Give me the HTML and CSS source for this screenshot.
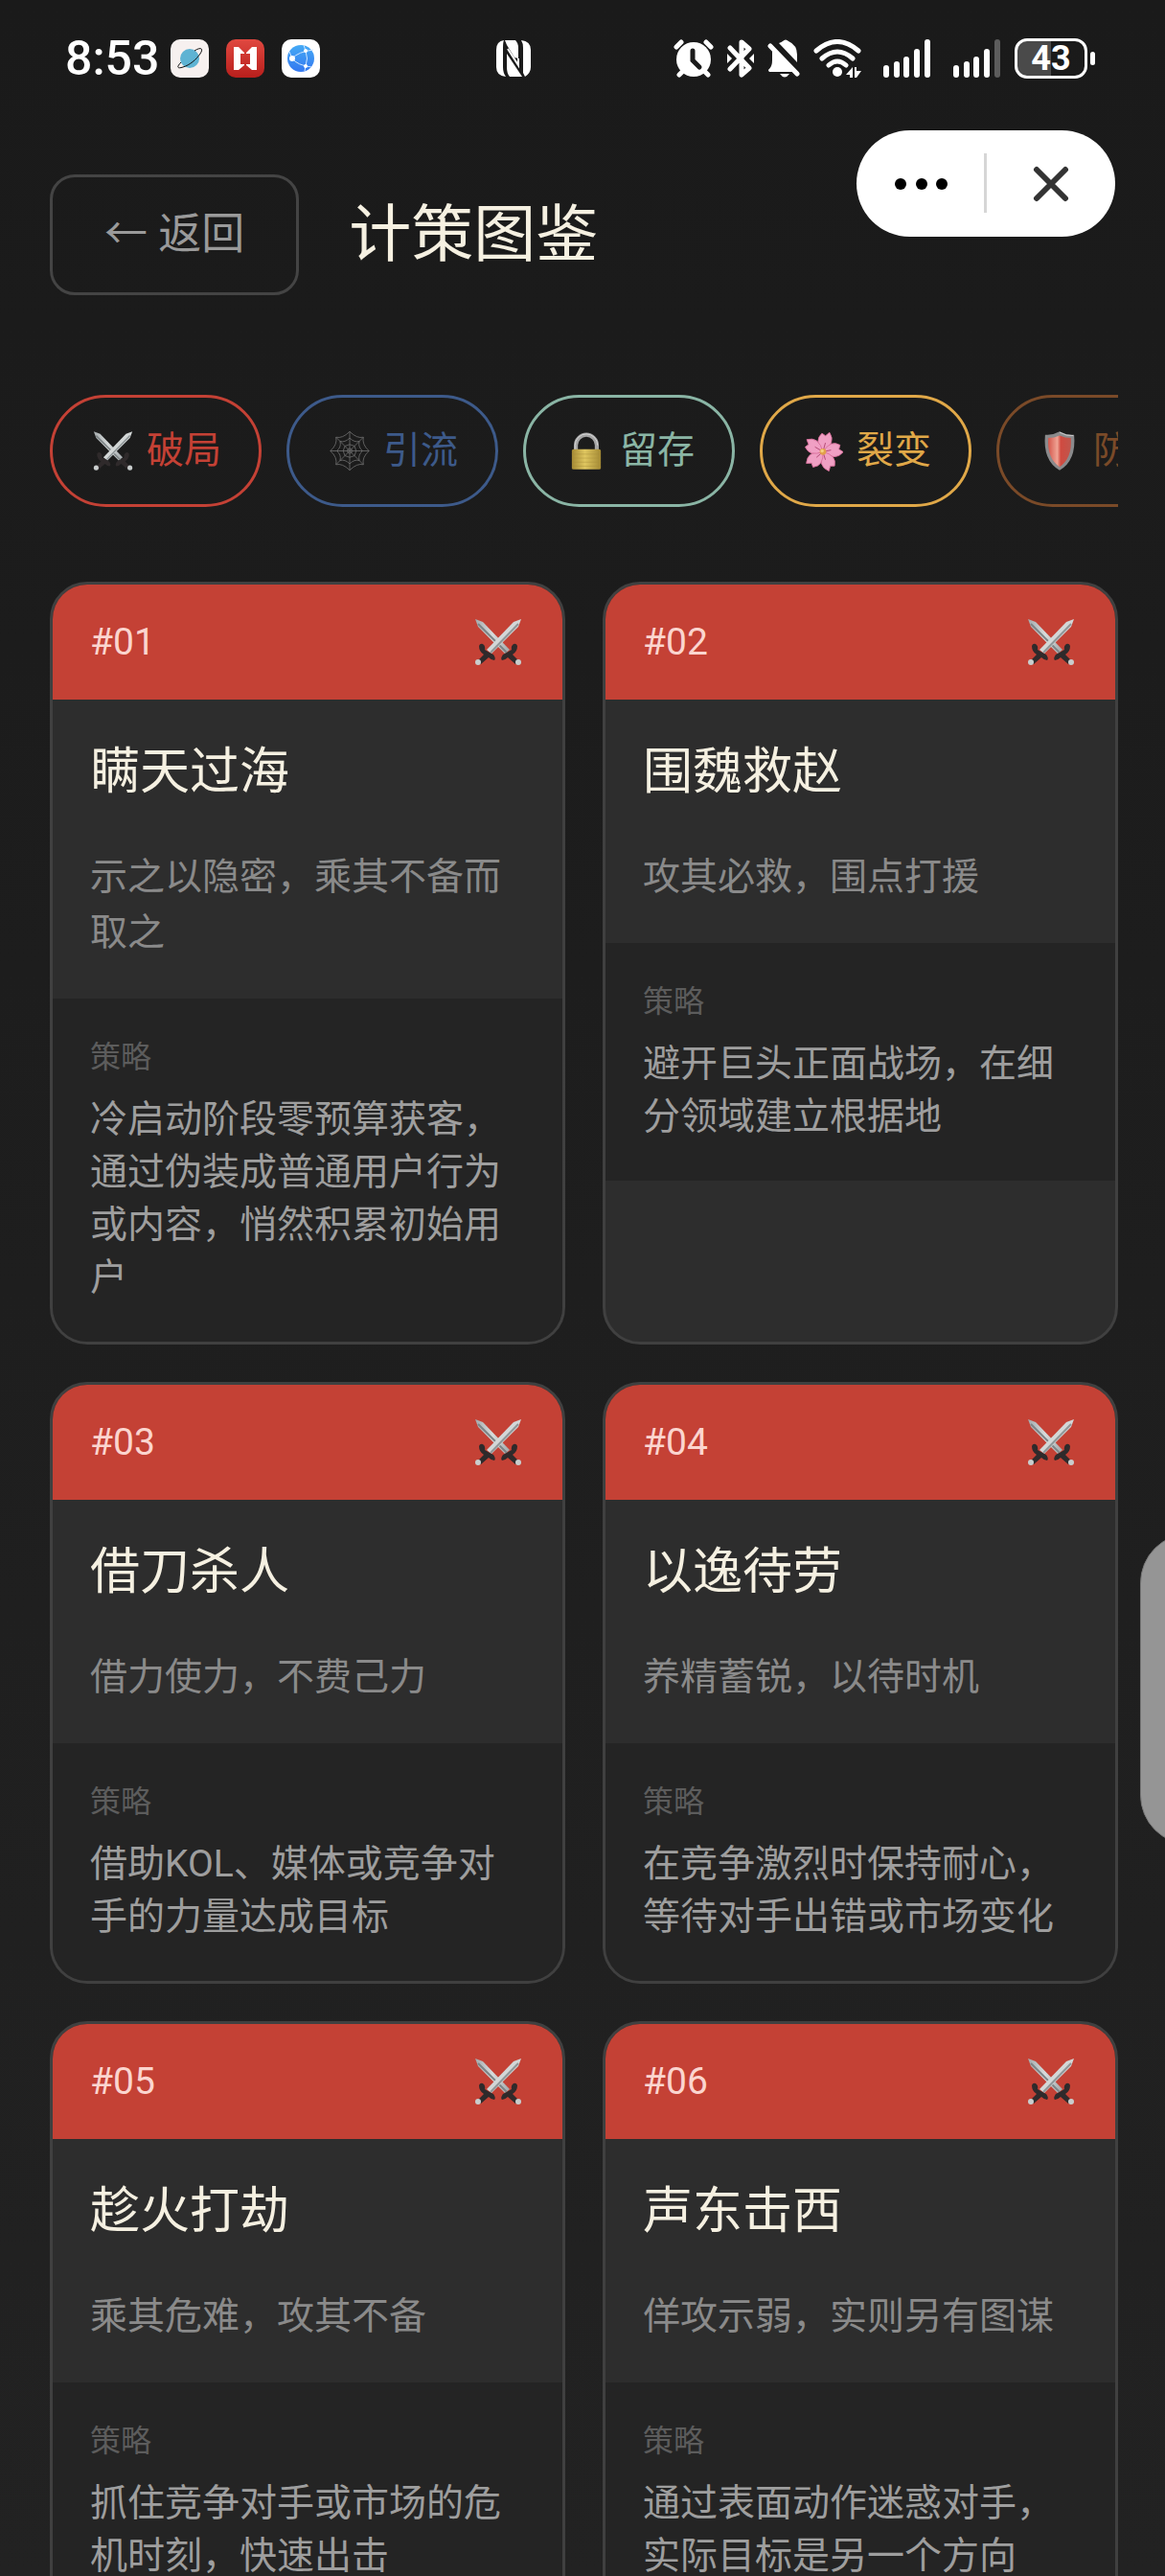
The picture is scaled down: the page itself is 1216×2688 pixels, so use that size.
FILE: index.html
```html
<!DOCTYPE html>
<html lang="zh-CN">
<head>
  <meta charset="UTF-8" />
  <meta name="viewport" content="width=device-width, initial-scale=1.0"/>
  <title>计策图鉴</title>
  <link rel="stylesheet" href="styles.css">
</head>
<body>

  <!-- Shared icons -->
  <svg class="sprite" aria-hidden="true">
    <defs>
      <linearGradient id="blade" x1="0" y1="0" x2="1" y2="0">
        <stop offset="0" stop-color="#a3a9ab"/>
        <stop offset="0.5" stop-color="#d8dcdc"/>
        <stop offset="1" stop-color="#a3a9ab"/>
      </linearGradient>
      <linearGradient id="gold" x1="0" y1="0" x2="1" y2="0">
        <stop offset="0" stop-color="#a58a35"/>
        <stop offset="0.45" stop-color="#dfc660"/>
        <stop offset="1" stop-color="#a48a34"/>
      </linearGradient>
      <linearGradient id="shieldRed" x1="0" y1="0" x2="1" y2="0">
        <stop offset="0" stop-color="#d4574c"/>
        <stop offset="0.4" stop-color="#f0a394"/>
        <stop offset="0.55" stop-color="#d04a40"/>
        <stop offset="1" stop-color="#c0564c"/>
      </linearGradient>
      <linearGradient id="appRed" x1="0" y1="0" x2="0" y2="1">
        <stop offset="0" stop-color="#e04840"/>
        <stop offset="1" stop-color="#b81f1c"/>
      </linearGradient>
      <linearGradient id="globeBlue" x1="0" y1="0" x2="0" y2="1">
        <stop offset="0" stop-color="#45aaf5"/>
        <stop offset="1" stop-color="#3478f0"/>
      </linearGradient>
    </defs>
    <symbol id="swords" viewBox="0 0 50 50">
      <path d="M1 1L9 4L37 33L32 37L4 9z" fill="url(#blade)"/>
      <path d="M4 6L34 36" stroke="#7d8486" stroke-width="2"/>
      <path d="M49 1L41 4L13 33L18 37L46 9z" fill="#d3d7d7"/>
      <path d="M46 6L17 36" stroke="#8f9698" stroke-width="2"/>
      <path d="M5 29Q6 26 9 27Q12 29 11 33Q16 36 20 38Q23 42 21 44Q18 44 15 41L7 48L3 45L10 38Q5 35 5 29z" fill="#2f2a2b"/>
      <path d="M45 29Q44 26 41 27Q38 29 39 33Q34 36 30 38Q27 42 29 44Q32 44 35 41L43 48L47 45L40 38Q45 35 45 29z" fill="#2f2a2b"/>
      <circle cx="4" cy="46" r="3" fill="#c9cdcd"/>
      <circle cx="46" cy="46" r="3" fill="#c9cdcd"/>
    </symbol>
    <symbol id="web" viewBox="0 0 50 50">
      <g fill="none" stroke="#6b6b6b" stroke-width="1">
        <path d="M25 1V49M1 25H49M8 8L42 42M42 8L8 42"/>
        <path d="M25 1Q34 10 42 8Q40 17 49 25Q40 33 42 42Q34 40 25 49Q16 40 8 42Q10 33 1 25Q10 17 8 8Q16 10 25 1z"/>
        <path d="M25 9Q31 15 37 13Q35 20 41 25Q35 30 37 37Q31 35 25 41Q19 35 13 37Q15 30 9 25Q15 20 13 13Q19 15 25 9z"/>
        <path d="M25 17L31 19L33 25L31 31L25 33L19 31L17 25L19 19z"/>
        <circle cx="25" cy="25" r="3"/>
      </g>
    </symbol>
    <symbol id="lock" viewBox="0 0 50 50">
      <path d="M12 25V18a13 13 0 0 1 26 0V25" fill="none" stroke="#a5a5a5" stroke-width="5"/>
      <path d="M11 25V18a14 14 0 0 1 28 0" fill="none" stroke="#dedede" stroke-width="1"/>
      <rect x="7" y="23" width="36" height="25" rx="2" fill="url(#gold)"/>
      <path d="M7 29H43M7 34H43M7 39H43M7 44H43" stroke="#a98f3c" stroke-width="1" opacity="0.5"/>
    </symbol>
    <symbol id="flower" viewBox="0 0 50 50">
      <g fill="#f0a0c4" stroke="#d9709c" stroke-width="1" transform="rotate(12 25 26)">
        <path id="petal" d="M25 26Q11 15 19 4L24 6L28 1Q39 12 25 26z"/>
        <use href="#petal" transform="rotate(72 25 26)"/>
        <use href="#petal" transform="rotate(144 25 26)"/>
        <use href="#petal" transform="rotate(216 25 26)"/>
        <use href="#petal" transform="rotate(288 25 26)"/>
      </g>
      <g stroke="#a83c68" stroke-width="1">
        <path d="M25 26L28 15M25 26L35 24M25 26L28 36M25 26L17 33M25 26L15 20"/>
      </g>
      <circle cx="25" cy="26" r="4" fill="#e2a04a"/>
      <circle cx="24" cy="25" r="2" fill="#f5d080"/>
    </symbol>
    <symbol id="shield" viewBox="0 0 50 50">
      <path d="M25 1Q34 6 43 5Q46 37 25 49Q4 37 7 5Q16 6 25 1z" fill="#8a8a8c"/>
      <path d="M25 2Q34 7 42 6" fill="none" stroke="#d8d8d8" stroke-width="1"/>
      <path d="M25 6Q32 9 39 9Q41 34 25 45Q9 34 11 9Q18 9 25 6z" fill="url(#shieldRed)"/>
    </symbol>
    <symbol id="signal" viewBox="0 0 50 40">
      <rect x="0" y="27" width="6" height="13" rx="3"/>
      <rect x="11" y="23" width="6" height="17" rx="3"/>
      <rect x="21" y="18" width="6" height="22" rx="3"/>
      <rect x="32" y="10" width="6" height="30" rx="3"/>
    </symbol>
  </svg>

  <div class="screen">

    <!-- Phone status bar -->
    <div class="status-bar">
      <span class="time">8:53</span>
      <div class="status-apps">
        <svg width="40" height="40" viewBox="0 0 40 40">
          <rect width="40" height="40" rx="10" fill="#f6f0ef"/>
          <circle cx="20" cy="20" r="10" fill="#5eb3d3"/>
          <path d="M25 12C31 8 35 9 31 15C27 21 20 27 13 29C7 31 6 29 11 24" fill="none" stroke="#111" stroke-width="1"/>
        </svg>
        <svg width="40" height="40" viewBox="0 0 40 40">
          <rect width="40" height="40" rx="10" fill="url(#appRed)"/>
          <path d="M8 8H13L19 14V15H15V26H19V27L13 32H8zM32 8H27L21 14V15H25V26H21V27L27 32H32z" fill="#fff"/>
        </svg>
        <svg width="40" height="40" viewBox="0 0 40 40">
          <rect width="40" height="40" rx="10" fill="#fff"/>
          <circle cx="20" cy="20" r="14" fill="url(#globeBlue)"/>
          <g fill="none" stroke="#cfe6ff" stroke-width="1">
            <path d="M11 20Q17 13 33 11M11 20Q16 27 31 29M25 12Q28 20 25 28M11 20L8 13M25 12L23 6M25 28L24 33"/>
          </g>
          <g fill="#fff"><circle cx="11" cy="20" r="3"/><circle cx="25" cy="12" r="2"/><circle cx="25" cy="28" r="2"/></g>
        </svg>
      </div>
      <svg class="nfc" width="36" height="38" viewBox="0 0 36 38">
        <path d="M8 0Q0 1 0 10V28Q0 37 10 38Q7 34 7 28V8Q7 2 8 0z" fill="#fff"/>
        <path d="M9 0H20Q23 3 23 8V19L19 18L11 5z" fill="#fff"/>
        <path d="M13 17L27 38H14Q11 35 11 28V14z" fill="#fff"/>
        <path d="M26 0Q36 1 36 10V28Q36 34 30 38L28 34V8Q28 3 26 0z" fill="#fff"/>
        <path d="M12 9L23 26V19" fill="none" stroke="#fff" stroke-width="2"/>
      </svg>
      <div class="status-icons">
        <svg width="42" height="40" viewBox="0 0 42 40">
          <circle cx="21" cy="21" r="18" fill="#fff"/>
          <path d="M1 12L11 2M41 12L31 2" stroke="#1b1b1b" stroke-width="4"/>
          <g fill="none" stroke="#fff" stroke-width="5" stroke-linecap="round">
            <path d="M3 8L8 3M39 8L34 3M6 37L10 33M36 37L32 33"/>
          </g>
          <path d="M20 12V22L27 29" fill="none" stroke="#1b1b1b" stroke-width="5" stroke-linecap="round"/>
        </svg>
        <svg width="28" height="40" viewBox="0 0 28 40">
          <path d="M3 9L23 30L15 37V3L23 10L3 31" fill="none" stroke="#fff" stroke-width="5" stroke-linejoin="round" stroke-linecap="round"/>
          <path d="M0 15L5 20L0 25zM28 15L23 20L28 25z" fill="#fff"/>
        </svg>
        <svg width="34" height="40" viewBox="0 0 34 40">
          <path d="M12 4Q15 3 16 2Q19-1 22 2Q31 6 31 16V24zM5 12L27 34H2Q0 32 2 31Q5 28 5 22zM13 36H23Q18 43 13 36z" fill="#fff"/>
          <path d="M8 4L32 29" stroke="#1b1b1b" stroke-width="3"/>
          <path d="M3 7L31 36" stroke="#fff" stroke-width="5" stroke-linecap="round"/>
        </svg>
        <svg width="50" height="40" viewBox="0 0 50 40">
          <g fill="none" stroke="#fff" stroke-width="5" stroke-linecap="round">
            <path d="M3 12Q25-7 47 12M9 20Q25 6 41 20M16 27Q25 19 34 27"/>
          </g>
          <circle cx="25" cy="34" r="5" fill="#fff"/>
          <path d="M41 29V40H38V37H34zM43 40V29H45V33H50L45 40z" fill="#fff"/>
        </svg>
        <svg class="signal" width="50" height="40" viewBox="0 0 50 40">
          <use href="#signal"/><rect x="43" y="0" width="6" height="40" rx="3"/>
        </svg>
        <svg class="signal" width="50" height="40" viewBox="0 0 50 40">
          <use href="#signal"/><rect x="43" y="0" width="6" height="40" rx="3" fill="#5c5c5c"/>
        </svg>
        <span class="battery">43</span>
      </div>
    </div>

    <!-- Mini program capsule -->
    <div class="capsule">
      <button type="button" aria-label="更多">
        <svg width="56" height="12" viewBox="0 0 56 12"><circle cx="6" cy="6" r="6"/><circle cx="28" cy="6" r="6"/><circle cx="49" cy="6" r="6"/></svg>
      </button>
      <button type="button" aria-label="关闭">
        <svg width="38" height="38" viewBox="0 0 38 38"><path d="M4 4L34 34M34 4L4 34" stroke="#333" stroke-width="6" stroke-linecap="round"/></svg>
      </button>
    </div>

    <header class="page-header">
      <button type="button" class="back-btn">← 返回</button>
      <h1>计策图鉴</h1>
    </header>

    <nav class="tabs">
      <button type="button" class="tab tab-red"><svg><use href="#swords"/></svg>破局</button>
      <button type="button" class="tab tab-blue"><svg><use href="#web"/></svg>引流</button>
      <button type="button" class="tab tab-green"><svg><use href="#lock"/></svg>留存</button>
      <button type="button" class="tab tab-gold"><svg><use href="#flower"/></svg>裂变</button>
      <button type="button" class="tab tab-brown"><svg><use href="#shield"/></svg>防御</button>
    </nav>

    <main class="card-grid">
      <article class="card">
        <div class="card-header"><span>#01</span><svg><use href="#swords"/></svg></div>
        <div class="card-body">
          <h2>瞒天过海</h2>
          <p>示之以隐密，乘其不备而取之</p>
        </div>
        <div class="card-strategy">
          <h3>策略</h3>
          <p>冷启动阶段零预算获客，通过伪装成普通用户行为或内容，悄然积累初始用户</p>
        </div>
      </article>

      <article class="card">
        <div class="card-header"><span>#02</span><svg><use href="#swords"/></svg></div>
        <div class="card-body">
          <h2>围魏救赵</h2>
          <p>攻其必救，围点打援</p>
        </div>
        <div class="card-strategy">
          <h3>策略</h3>
          <p>避开巨头正面战场，在细分领域建立根据地</p>
        </div>
      </article>

      <article class="card">
        <div class="card-header"><span>#03</span><svg><use href="#swords"/></svg></div>
        <div class="card-body">
          <h2>借刀杀人</h2>
          <p>借力使力，不费己力</p>
        </div>
        <div class="card-strategy">
          <h3>策略</h3>
          <p>借助KOL、媒体或竞争对手的力量达成目标</p>
        </div>
      </article>

      <article class="card">
        <div class="card-header"><span>#04</span><svg><use href="#swords"/></svg></div>
        <div class="card-body">
          <h2>以逸待劳</h2>
          <p>养精蓄锐，以待时机</p>
        </div>
        <div class="card-strategy">
          <h3>策略</h3>
          <p>在竞争激烈时保持耐心，等待对手出错或市场变化</p>
        </div>
      </article>

      <article class="card">
        <div class="card-header"><span>#05</span><svg><use href="#swords"/></svg></div>
        <div class="card-body">
          <h2>趁火打劫</h2>
          <p>乘其危难，攻其不备</p>
        </div>
        <div class="card-strategy">
          <h3>策略</h3>
          <p>抓住竞争对手或市场的危机时刻，快速出击</p>
        </div>
      </article>

      <article class="card">
        <div class="card-header"><span>#06</span><svg><use href="#swords"/></svg></div>
        <div class="card-body">
          <h2>声东击西</h2>
          <p>佯攻示弱，实则另有图谋</p>
        </div>
        <div class="card-strategy">
          <h3>策略</h3>
          <p>通过表面动作迷惑对手，实际目标是另一个方向</p>
        </div>
      </article>
    </main>

    <div class="side-handle"></div>
  </div>

</body>
</html>
```

FILE: styles.css
```css
* {
  box-sizing: border-box;
}

body {
  margin: 0;
  background-color: #1a1a1a;
  color: #f5f0e1;
  font-family: Roboto, "Noto Sans CJK SC", sans-serif;
}

h1, h2, h3, p {
  margin: 0;
  font-weight: normal;
}

button {
  background: none;
  border: none;
  padding: 0;
  font-family: inherit;
  cursor: pointer;
}

svg {
  display: block;
  flex-shrink: 0;
}

.sprite {
  position: absolute;
  width: 0;
  height: 0;
}

.screen {
  position: relative;
  height: 100vh;
  overflow: hidden;
  background: linear-gradient(#1a1a1a, #222222);
}

/* Status bar */
.status-bar {
  display: flex;
  align-items: center;
  height: 122px;
  padding: 0 73px 0 68px;
  color: #fff;
}

.time {
  width: 110px;
  font-size: 50px;
  font-weight: 500;
}

.status-apps {
  display: flex;
  gap: 18px;
}

.nfc {
  margin-left: 184px;
}

.status-icons {
  display: flex;
  align-items: center;
  gap: 14px;
  margin-left: auto;
}

.signal {
  margin-left: 9px;
  fill: #fff;
}

.battery {
  position: relative;
  width: 76px;
  height: 42px;
  margin-right: 8px;
  border: 3px solid #fff;
  border-radius: 13px;
  background: linear-gradient(90deg, #4a4a4a 50%, transparent 50%);
  font-size: 36px;
  font-weight: bold;
  line-height: 37px;
  text-align: center;
}

.battery::after {
  content: "";
  position: absolute;
  top: 11px;
  right: -11px;
  width: 5px;
  height: 14px;
  border-radius: 3px;
  background-color: #fff;
}

/* Floating capsule */
.capsule {
  position: absolute;
  top: 136px;
  right: 52px;
  display: flex;
  width: 270px;
  height: 111px;
  border-radius: 56px;
  background-color: #fff;
}

.capsule button {
  flex: 1;
  display: flex;
  align-items: center;
  justify-content: center;
}

.capsule::before {
  content: "";
  position: absolute;
  top: 24px;
  left: 133px;
  width: 3px;
  height: 62px;
  background-color: #d6d6d6;
}

/* Header */
.page-header {
  display: flex;
  align-items: center;
  gap: 52px;
  padding: 60px 49px 0 52px;
}

.back-btn {
  height: 126px;
  padding: 0 54px;
  border: 3px solid #444;
  border-radius: 26px;
  color: #9a9a9a;
  font-size: 45px;
  line-height: 60px;
}

.page-header h1 {
  font-size: 65px;
  line-height: 90px;
}

/* Category tabs */
.tabs {
  display: flex;
  gap: 26px;
  margin: 104px 49px 78px 52px;
  overflow: hidden;
}

.tab {
  display: flex;
  flex-shrink: 0;
  align-items: center;
  gap: 14px;
  height: 117px;
  padding: 0 39px 0 42px;
  border: 3px solid;
  border-radius: 59px;
  font-size: 39px;
  line-height: 55px;
}

.tab svg {
  width: 42px;
  height: 43px;
}

.tab-red {
  color: #c44135;
}

.tab-blue {
  color: #3d5a8a;
}

.tab-green {
  color: #8ab5a5;
}

.tab-gold {
  color: #e0a848;
}

.tab-brown {
  color: #7a4a28;
}

/* Cards */
.card-grid {
  display: grid;
  grid-template-columns: 1fr 1fr;
  gap: 39px;
  padding: 0 49px 39px 52px;
}

.card {
  border: 3px solid #404040;
  border-radius: 39px;
  background-color: #2d2d2d;
  overflow: hidden;
}

.card-header {
  display: flex;
  align-items: center;
  justify-content: space-between;
  height: 120px;
  padding: 0 42px 0 39px;
  background-color: #c44135;
  color: #fbd5cf;
  font-size: 39px;
  line-height: 55px;
}

.card-header svg {
  width: 50px;
  height: 50px;
}

.card-body {
  padding: 39px 39px 40px;
}

.card-body h2 {
  margin-bottom: 44px;
  font-size: 52px;
  line-height: 73px;
}

.card-body p {
  color: #8a8a8a;
  font-size: 39px;
  line-height: 58px;
}

.card-strategy {
  padding: 39px;
  background-color: #242424;
}

.card-strategy h3 {
  margin-bottom: 16px;
  color: #5c5c5c;
  font-size: 32px;
  line-height: 44px;
}

.card-strategy p {
  color: #9e9e9e;
  font-size: 39px;
  line-height: 55px;
}

/* System side panel handle */
.side-handle {
  position: absolute;
  top: 1600px;
  right: -78px;
  width: 104px;
  height: 325px;
  border: 1px solid #777;
  border-radius: 52px;
  background-color: #959595;
}
```
